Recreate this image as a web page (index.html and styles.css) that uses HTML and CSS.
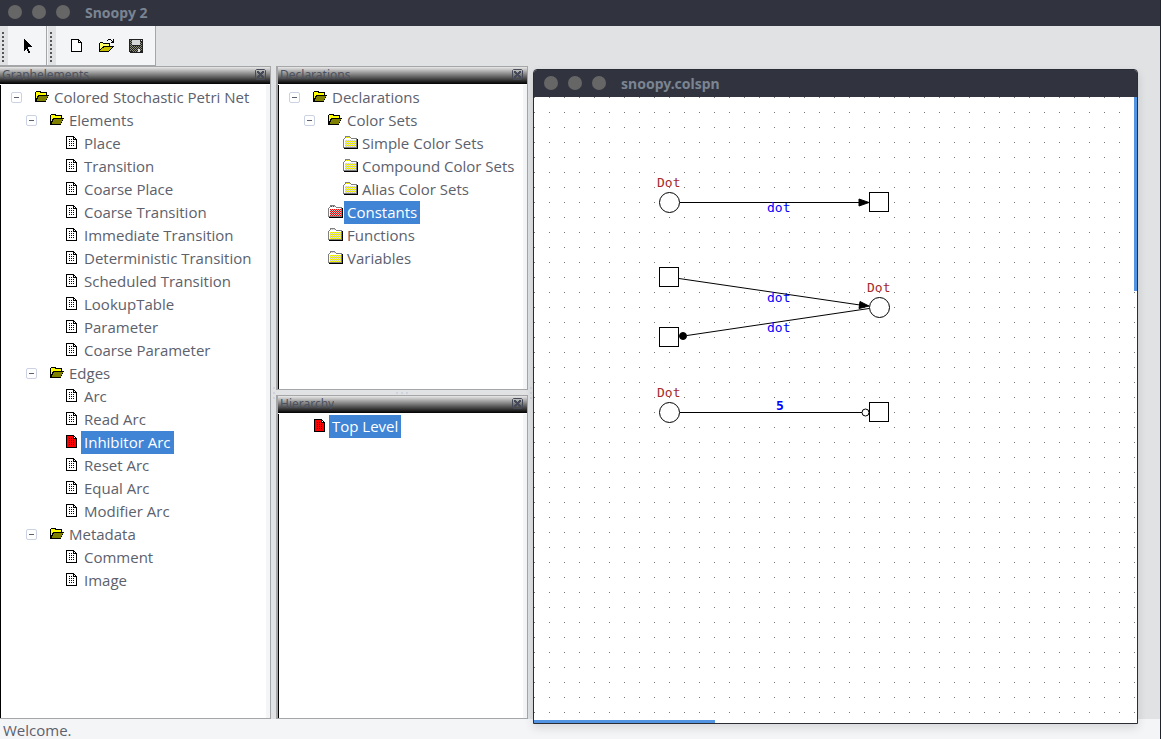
FILE: index.html
```html
<!DOCTYPE html>
<html lang="en">
<head>
<meta charset="utf-8">
<title>Snoopy 2</title>
<link rel="stylesheet" href="styles.css">
</head>
<body>
<svg class="sprite" aria-hidden="true">
  <defs>
    <symbol id="open-folder" viewBox="0 0 16 16">
      <path d="M1 3h1v-1h5v1h6v3h2v1h-1v2h-1v2h-1v2H1z" fill="#000"/>
      <path d="M2 3h4v1h6v2H4v1H3v2H2z" fill="#ff0"/>
      <path d="M5 7h9v1h-1v2h-1v2H3v-2h1V8h1z" fill="#808000"/>
    </symbol>
    <pattern id="yellow-weave" width="2" height="2" patternUnits="userSpaceOnUse">
      <rect width="2" height="2" fill="#c8c8c8"/><path d="M0 0h1v1H0zM1 1h1v1H1z" fill="#ff0"/>
    </pattern>
    <pattern id="red-weave" width="2" height="2" patternUnits="userSpaceOnUse">
      <rect width="2" height="2" fill="#c8c8c8"/><path d="M0 0h1v1H0zM1 1h1v1H1z" fill="#f00"/>
    </pattern>
    <pattern id="steel-weave" width="2" height="2" patternUnits="userSpaceOnUse">
      <rect width="2" height="2" fill="#222"/><path d="M0 0h1v1H0zM1 1h1v1H1z" fill="#8c8c78"/>
    </pattern>
    <symbol id="folder" viewBox="0 0 16 16">
      <path d="M2 12h13V4h1v10H2z" fill="#000"/>
      <path d="M1 4h1V3h1V1h5v1h1v1h6v10H1z" fill="#808080"/>
      <path d="M2 4h1V3h1V2h4v1h1v1h5v8H2z" fill="#fff"/>
      <path d="M3 5h11v7H3zM4 2h4v1H4z" fill="url(#yellow-weave)"/>
    </symbol>
    <symbol id="red-folder" viewBox="0 0 16 16">
      <path d="M2 12h13V4h1v10H2z" fill="#000"/>
      <path d="M1 4h1V3h1V1h5v1h1v1h6v10H1z" fill="#808080"/>
      <path d="M2 4h1V3h1V2h4v1h1v1h5v8H2z" fill="#fff"/>
      <path d="M3 5h11v7H3zM4 2h4v1H4z" fill="url(#red-weave)"/>
    </symbol>
    <pattern id="ink" width="2" height="2" patternUnits="userSpaceOnUse"><path d="M1 0h1v1H1z" fill="#000"/></pattern>
    <symbol id="page" viewBox="0 0 16 16">
      <path d="M2 1h8v1h1v1h1v1h1v10H2z" fill="#000"/>
      <path d="M3 2h6v3h3v8H3z" fill="#fff"/><path d="M10 3h1v1h-1z" fill="#fff"/>
      <path d="M4 4h4v2h3v6H4z" fill="url(#ink)"/>
    </symbol>
    <symbol id="red-page" viewBox="0 0 16 16">
      <path d="M2 1h8v1h1v1h1v1h1v10H2z" fill="#000"/>
      <path d="M3 2h6v3h3v8H3z" fill="#f00"/><path d="M10 3h1v1h-1z" fill="#fff"/>
      <path d="M4 4h4v2h3v6H4z" fill="url(#ink)"/>
    </symbol>
    <symbol id="close" viewBox="0 0 11 11">
      <path d="M1.500.5h8l1 1v8l-1 1h-8l-1-1v-8z" fill="none" stroke="#444a58"/>
      <path d="M2 2h2v1h1v1h1V3h1V2h2v2H8v1H7v1h1v1h1v2H7V8H6V7H5v1H4v1H2V7h1V6h1V5H3V4H2z" fill="#444a58"/>
    </symbol>
  </defs>
</svg>

<div class="app">
  <header class="titlebar">
    <div class="lights"><button aria-label="Close"></button><button aria-label="Minimize"></button><button aria-label="Maximize"></button></div>
    <h1 class="title">Snoopy 2</h1>
  </header>

  <div class="toolbars">
    <div class="toolbar toolbar-select" role="toolbar" aria-label="Selection">
      <span class="grip"></span>
      <div class="tools">
        <button class="tool" aria-label="Select"><svg class="glyph" viewBox="0 -1 16 16"><path d="M4 0h1v1h1v1h1v1h1v1h1v1h1v1h1v1h1v1h-4v2h1v2h1v2h-2v-2H7v-2H6v1H5v1H4z"/></svg></button>
      </div>
    </div>
    <div class="toolbar toolbar-file" role="toolbar" aria-label="File">
      <span class="grip"></span>
      <div class="tools">
        <button class="tool" aria-label="New"><svg class="glyph" viewBox="0 0 16 16"><path d="M3 1h8v1h1v1h1v1h1v10H3z"/><path d="M4 2h6v3h3v8H4z" fill="#fff"/><path d="M11 3h1v1h-1z" fill="#fff"/></svg></button>
        <button class="tool" aria-label="Open"><svg class="glyph" viewBox="-1 0 16 16"><path d="M9 1h3v1h1v1h1V1h1v4h-3V4h1V3h-1V2H9v1H8V2h1z"/><path d="M0 5h1V4h3v1h7v3h4v1h-1v1h-1v1h-1v1h-1v1h-1v1H0z"/><path d="M1 5h3v1h6v2H4v1H3v1H2v1H1z" fill="#ff6"/><path d="M5 9h8v1h-1v1h-1v1h-1v1H1v-1h1v-1h1v-1h2z" fill="#c5bd00"/></svg></button>
        <button class="tool" aria-label="Save"><svg class="glyph" viewBox="0 0 16 16"><path d="M1 1h14v14H2v-1H1z" fill="#222"/><path d="M2 2h2v6h8V4h2v9H2z" fill="url(#steel-weave)"/><path d="M4 2h8v5H4z" fill="#d5d6d8"/><path d="M13 2h1v1h-1zM10 11h2v3h-2z" fill="#e5e5e5"/><path d="M4 10h6v4H4z" fill="url(#steel-weave)"/></svg></button>
      </div>
    </div>
  </div>

  <main class="workspace">
    <section class="panel panel-left">
      <div class="caption"><h2>Graphelements</h2><button class="close" aria-label="Close Graphelements"><svg><use href="#close"/></svg></button></div>
      <div class="tree">
        <ul>
          <li><div class="row"><button class="toggle" aria-label="Collapse"></button><svg class="icon"><use href="#open-folder"/></svg><span class="label">Colored Stochastic Petri Net</span></div>
            <ul>
              <li><div class="row"><button class="toggle" aria-label="Collapse"></button><svg class="icon"><use href="#open-folder"/></svg><span class="label">Elements</span></div>
                <ul>
                  <li class="row"><svg class="icon"><use href="#page"/></svg><span class="label">Place</span></li>
                  <li class="row"><svg class="icon"><use href="#page"/></svg><span class="label">Transition</span></li>
                  <li class="row"><svg class="icon"><use href="#page"/></svg><span class="label">Coarse Place</span></li>
                  <li class="row"><svg class="icon"><use href="#page"/></svg><span class="label">Coarse Transition</span></li>
                  <li class="row"><svg class="icon"><use href="#page"/></svg><span class="label">Immediate Transition</span></li>
                  <li class="row"><svg class="icon"><use href="#page"/></svg><span class="label">Deterministic Transition</span></li>
                  <li class="row"><svg class="icon"><use href="#page"/></svg><span class="label">Scheduled Transition</span></li>
                  <li class="row"><svg class="icon"><use href="#page"/></svg><span class="label">LookupTable</span></li>
                  <li class="row"><svg class="icon"><use href="#page"/></svg><span class="label">Parameter</span></li>
                  <li class="row"><svg class="icon"><use href="#page"/></svg><span class="label">Coarse Parameter</span></li>
                </ul>
              </li>
              <li><div class="row"><button class="toggle" aria-label="Collapse"></button><svg class="icon"><use href="#open-folder"/></svg><span class="label">Edges</span></div>
                <ul>
                  <li class="row"><svg class="icon"><use href="#page"/></svg><span class="label">Arc</span></li>
                  <li class="row"><svg class="icon"><use href="#page"/></svg><span class="label">Read Arc</span></li>
                  <li class="row"><svg class="icon"><use href="#red-page"/></svg><span class="label selected">Inhibitor Arc</span></li>
                  <li class="row"><svg class="icon"><use href="#page"/></svg><span class="label">Reset Arc</span></li>
                  <li class="row"><svg class="icon"><use href="#page"/></svg><span class="label">Equal Arc</span></li>
                  <li class="row"><svg class="icon"><use href="#page"/></svg><span class="label">Modifier Arc</span></li>
                </ul>
              </li>
              <li><div class="row"><button class="toggle" aria-label="Collapse"></button><svg class="icon"><use href="#open-folder"/></svg><span class="label">Metadata</span></div>
                <ul>
                  <li class="row"><svg class="icon"><use href="#page"/></svg><span class="label">Comment</span></li>
                  <li class="row"><svg class="icon"><use href="#page"/></svg><span class="label">Image</span></li>
                </ul>
              </li>
            </ul>
          </li>
        </ul>
      </div>
    </section>
    <div class="sash sash-v"><i></i><i></i><i></i></div>
    <div class="middle">
      <section class="panel">
        <div class="caption"><h2>Declarations</h2><button class="close" aria-label="Close Declarations"><svg><use href="#close"/></svg></button></div>
        <div class="tree">
          <ul>
            <li><div class="row"><button class="toggle" aria-label="Collapse"></button><svg class="icon"><use href="#open-folder"/></svg><span class="label">Declarations</span></div>
              <ul>
                <li><div class="row"><button class="toggle" aria-label="Collapse"></button><svg class="icon"><use href="#open-folder"/></svg><span class="label">Color Sets</span></div>
                  <ul>
                    <li class="row"><svg class="icon"><use href="#folder"/></svg><span class="label">Simple Color Sets</span></li>
                    <li class="row"><svg class="icon"><use href="#folder"/></svg><span class="label">Compound Color Sets</span></li>
                    <li class="row"><svg class="icon"><use href="#folder"/></svg><span class="label">Alias Color Sets</span></li>
                  </ul>
                </li>
                <li class="row"><svg class="icon"><use href="#red-folder"/></svg><span class="label selected">Constants</span></li>
                <li class="row"><svg class="icon"><use href="#folder"/></svg><span class="label">Functions</span></li>
                <li class="row"><svg class="icon"><use href="#folder"/></svg><span class="label">Variables</span></li>
              </ul>
            </li>
          </ul>
        </div>
      </section>
      <div class="sash sash-h"><i></i><i></i><i></i></div>
      <section class="panel">
        <div class="caption"><h2>Hierarchy</h2><button class="close" aria-label="Close Hierarchy"><svg><use href="#close"/></svg></button></div>
        <div class="tree">
          <ul><li class="row"><svg class="icon"><use href="#red-page"/></svg><span class="label selected">Top Level</span></li></ul>
        </div>
      </section>
    </div>
    <div class="sash sash-v"><i></i><i></i><i></i></div>
  </main>

  <footer class="status">Welcome.</footer>

  <section class="window">
    <header class="titlebar window-bar">
      <div class="lights"><button aria-label="Close window"></button><button aria-label="Minimize window"></button><button aria-label="Maximize window"></button></div>
      <h2 class="title">snoopy.colspn</h2>
    </header>
    <div class="canvas">
      <svg class="net" role="img" aria-label="Petri net">
        <defs><pattern id="grid" width="15" height="15" patternUnits="userSpaceOnUse"><path d="M0 0h1v1H0z" fill="#777"/></pattern></defs>
        <rect width="100%" height="100%" fill="url(#grid)"/>
        <g class="arcs">
          <path d="M146 105.500H326M145 181.500L326 208M335 211.500L153 238.500M146 315.500H328"/>
          <path class="solid" d="M325 102v7l10-3.500zM326 204.500l-1 7 10-2.500z"/>
          <circle class="solid" cx="149" cy="239" r="3.500"/>
          <circle cx="331.500" cy="315.500" r="3.500"/>
        </g>
        <g class="nodes">
          <circle cx="135.500" cy="105.500" r="10"/>
          <rect x="335.500" y="95.500" width="19" height="19"/>
          <rect x="125.500" y="170.500" width="19" height="19"/>
          <rect x="125.500" y="230.500" width="19" height="19"/>
          <circle cx="345.500" cy="210.500" r="10"/>
          <circle cx="135.500" cy="315.500" r="10"/>
          <rect x="335.500" y="305.500" width="19" height="19"/>
        </g>
        <g class="color-name">
          <text x="123" y="90">Dot</text><text x="333" y="195">Dot</text><text x="123" y="300">Dot</text>
        </g>
        <g class="inscription">
          <text x="233" y="115">dot</text><text x="233" y="205">dot</text><text x="233" y="235">dot</text><text class="weight" x="242" y="313">5</text>
        </g>
      </svg>
      <span class="scroll scroll-v"></span>
      <span class="scroll scroll-h"></span>
    </div>
  </section>
</div>
</body>
</html>
```
FILE: styles.css
```css
* { box-sizing: border-box; }

body {
  margin: 0;
  font-family: "Open Sans", "Noto Sans", sans-serif;
  font-size: 15px;
  color: #5c616c;
}

h1, h2, ul { margin: 0; padding: 0; }
ul { list-style: none; }
button { padding: 0; border: 0; background: none; }
svg { display: block; flex: none; }
.sprite { position: absolute; width: 0; height: 0; }

.app {
  position: relative;
  display: flex;
  flex-direction: column;
  height: 100vh;
  overflow: hidden;
  background: #e1e2e4;
  border-right: 1px solid #20232c;
}

/* Title bars */
.titlebar {
  display: flex;
  align-items: center;
  gap: 15px;
  height: 26px;
  flex: none;
  padding: 0 8px 2px;
  background: #31343f;
}
.lights { display: flex; gap: 10px; }
.lights button {
  width: 14px;
  height: 14px;
  border-radius: 50%;
  background: #666;
}
.title {
  font-family: "Noto Sans", sans-serif;
  font-size: 14px;
  line-height: 20px;
  font-weight: 700;
  color: #7b8492;
  padding-top: 2px;
}

/* Toolbars */
.toolbars { display: flex; height: 40px; flex: none; }
.toolbar {
  display: flex;
  align-items: center;
  height: 40px;
  background: #f4f5f7;
  border-right: 1px solid #a5a6a8;
  border-bottom: 1px solid #a5a6a8;
}
.toolbar-select { width: 47px; }
.toolbar-file { width: 109px; padding-left: 1px; }
.grip {
  width: 8px;
  height: 100%;
  flex: none;
  background: #e1e2e4 repeating-linear-gradient(#555 0 2px, #e1e2e4 2px 4px) 2px 6px / 2px 30px no-repeat;
}
.tools { display: flex; gap: 14px; padding: 1px 0 0 12px; }
.tool { width: 16px; height: 16px; flex: none; }
.glyph { width: 16px; height: 16px; shape-rendering: crispEdges; }

/* Docked panels */
.workspace { display: flex; flex: 1; min-height: 0; }
.panel {
  display: flex;
  flex-direction: column;
  min-height: 0;
  border: 1px solid #a5a6a8;
  border-left-width: 2px;
  background: #fff;
}
.panel-left { width: 271px; border-left-width: 0; }
.middle {
  display: grid;
  grid-template-rows: 324px 5px 1fr;
  width: 252px;
}
.caption {
  display: flex;
  justify-content: space-between;
  height: 17px;
  flex: none;
  padding: 1px 4px 0 2px;
  background: linear-gradient(#e8e8e8, #000);
}
.caption h2 {
  height: 12px;
  overflow: hidden;
  font-family: "Noto Sans", sans-serif;
  font-size: 12px;
  line-height: 14px;
  font-weight: 400;
  color: #4c525f;
}
.close, .close svg { width: 11px; height: 11px; }
.close { margin-top: 1px; }
.tree {
  flex: 1;
  margin-top: 1px;
  padding-top: 1px;
  border-left: 1px solid #000;
  border-right: 4px solid #f4f5f7;
}
.tree ul ul { padding-left: 15px; }
.row {
  display: flex;
  align-items: flex-start;
  height: 23px;
  padding-left: 33px;
}
.row:has(.toggle) { padding-left: 10px; }
.toggle {
  width: 11px;
  height: 11px;
  flex: none;
  margin: 6px 12px 0 0;
  border: 1px solid #cad2e3;
  border-radius: 2px;
  background: linear-gradient(#5c616c, #5c616c) center / 5px 1px no-repeat #fff;
}
.icon {
  width: 16px;
  height: 16px;
  margin: 3px 1px 0 0;
  shape-rendering: crispEdges;
}
.label {
  padding: 0 3px;
  line-height: 23px;
  white-space: nowrap;
}
.selected { background: #4084d6; color: #fff; }

.sash { display: flex; align-items: center; justify-content: center; gap: 3px; }
.sash-v { width: 5px; flex-direction: column; }
.sash i { width: 2px; height: 2px; background: #cfd3e0; }

.status {
  height: 20px;
  flex: none;
  padding-left: 3px;
  line-height: 23px;
  background: #f4f5f7;
}

/* Floating document window */
.window {
  position: absolute;
  left: 533px;
  top: 69px;
  right: 22px;
  bottom: 15px;
  display: flex;
  flex-direction: column;
  border: 1px solid #2b2d35;
  border-radius: 4px 4px 0 0;
  background: #fff;
  box-shadow: 0 4px 10px rgba(0, 0, 0, 0.12);
}
.window-bar { height: 27px; padding-left: 10px; border-radius: 3px 3px 0 0; }
.canvas { position: relative; flex: 1; overflow: hidden; }
.net { width: 100%; height: 100%; font: 13px "DejaVu Sans Mono", monospace; }
.arcs, .nodes { fill: #fff; stroke: #000; stroke-width: 1; }
.arcs .solid { fill: #000; }
.color-name { fill: #a52a2a; }
.inscription { fill: #00f; }
.weight { font-weight: 700; }
.scroll { position: absolute; background: #5294e2; }
.scroll-v { right: 0; top: 0; width: 3px; height: 31%; }
.scroll-h { left: 0; bottom: 0; width: 30%; height: 3px; }
```
